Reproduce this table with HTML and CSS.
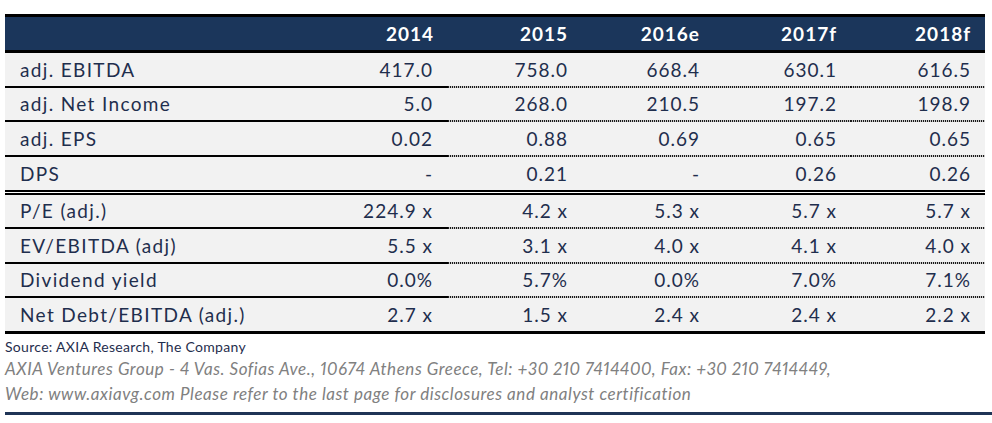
FILE: index.html
```html
<!DOCTYPE html>
<html>
<head>
<meta charset="utf-8">
<link rel="stylesheet" href="styles.css">
</head>
<body>
<div class="page">
  <table class="fin">
    <colgroup>
      <col class="c-label"><col class="c-2014"><col class="c-2015"><col class="c-2016"><col class="c-2017"><col class="c-2018">
    </colgroup>
    <thead>
      <tr><th class="lbl"></th><th>2014</th><th>2015</th><th>2016e</th><th>2017f</th><th>2018f</th></tr>
    </thead>
    <tbody>
      <tr><td class="lbl">adj. EBITDA</td><td class="first">417.0</td><td>758.0</td><td>668.4</td><td>630.1</td><td>616.5</td></tr>
      <tr><td class="lbl">adj. Net Income</td><td class="first">5.0</td><td>268.0</td><td>210.5</td><td>197.2</td><td>198.9</td></tr>
      <tr><td class="lbl">adj. EPS</td><td class="first">0.02</td><td>0.88</td><td>0.69</td><td>0.65</td><td>0.65</td></tr>
      <tr class="split"><td class="lbl">DPS</td><td class="first">-</td><td>0.21</td><td>-</td><td>0.26</td><td>0.26</td></tr>
      <tr><td class="lbl">P/E (adj.)</td><td class="first">224.9 x</td><td>4.2 x</td><td>5.3 x</td><td>5.7 x</td><td>5.7 x</td></tr>
      <tr><td class="lbl">EV/EBITDA (adj)</td><td class="first">5.5 x</td><td>3.1 x</td><td>4.0 x</td><td>4.1 x</td><td>4.0 x</td></tr>
      <tr><td class="lbl">Dividend yield</td><td class="first">0.0%</td><td>5.7%</td><td>0.0%</td><td>7.0%</td><td>7.1%</td></tr>
      <tr class="last"><td class="lbl">Net Debt/EBITDA (adj.)</td><td class="first">2.7 x</td><td>1.5 x</td><td>2.4 x</td><td>2.4 x</td><td>2.2 x</td></tr>
    </tbody>
  </table>
  <p class="source">Source: AXIA Research, The Company</p>
  <p class="footer first-line">AXIA Ventures Group - 4 Vas. Sofias Ave., 10674 Athens Greece, Tel: +30 210 7414400, Fax: +30 210 7414449,</p>
  <p class="footer">Web: www.axiavg.com Please refer to the last page for disclosures and analyst certification</p>
  <div class="rule"></div>
</div>
</body>
</html>
```
FILE: styles.css
```css
html, body {
  margin: 0;
  padding: 0;
  background: #ffffff;
}
.page {
  padding: 14px 0 0 5px;
  font-family: Lato, "Open Sans", sans-serif;
  color: #1f2e4d;
}
.fin {
  width: 980px;
  border-collapse: separate;
  border-spacing: 0;
  table-layout: fixed;
  font-size: 19px;
  letter-spacing: 1px;
}
.c-label { width: 310px; }
.c-2014 { width: 133px; }
.c-2015 { width: 134px; }
.c-2016 { width: 132px; }
.c-2017 { width: 137px; }
.c-2018 { width: 134px; }
.fin th {
  box-sizing: border-box;
  background: #1b365b;
  color: #ffffff;
  font-weight: 700;
  text-align: right;
  height: 39px;
  padding: 0 14px 0 0;
  border-top: 3px solid #000;
  border-bottom: 3px solid #000;
}
.fin td {
  box-sizing: border-box;
  height: 34.5px;
  padding: 0 14px 0 0;
  text-align: right;
  border-bottom: 2px solid transparent;
  background:
    linear-gradient(#f2f2f2, #f2f2f2) padding-box,
    repeating-linear-gradient(90deg, #1a1a1a 0 1px, #c8c8c8 1px 2px) border-box;
}
.fin td.first { padding-right: 15px; }
.fin td.lbl, .fin td.first {
  background: #f2f2f2 padding-box;
  border-bottom: 2px solid #000;
}
.fin td.lbl {
  text-align: left;
  padding-left: 15px;
  letter-spacing: 1.35px;
}
.fin tr.split td {
  height: 38px;
  border-bottom: 5px double #000;
  background: #f2f2f2 padding-box;
}
.fin tr.last td {
  height: 35.5px;
  border-bottom: 3px solid #000;
  background: #f2f2f2 padding-box;
}
.source {
  margin: 4px 0 0 0;
  font-size: 14px;
  line-height: 17px;
  letter-spacing: 0.3px;
  color: #1f2e4d;
}
.footer {
  margin: 0;
  font-size: 17px;
  line-height: 25px;
  font-style: italic;
  letter-spacing: 0.55px;
  font-variant-numeric: proportional-nums;
  color: #808080;
}
.footer.first-line { margin-top: 1px; }
.rule {
  margin-top: 6px;
  height: 3px;
  background: #1f3456;
}
```
